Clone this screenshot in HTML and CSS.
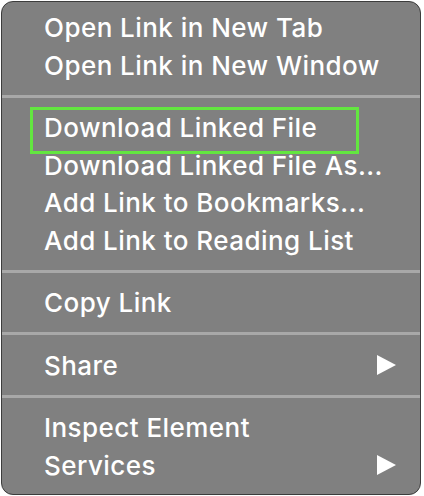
FILE: index.html
```html
<!DOCTYPE html>
<html lang="en">
<head>
<meta charset="utf-8">
<title>Context Menu</title>
<link rel="stylesheet" href="styles.css">
</head>
<body>
<div class="menu">
  <div class="item">Open Link in New Tab</div>
  <div class="item">Open Link in New Window</div>
  <div class="sep"></div>
  <div class="item highlighted">Download Linked File</div>
  <div class="item">Download Linked File As...</div>
  <div class="item">Add Link to Bookmarks...</div>
  <div class="item">Add Link to Reading List</div>
  <div class="sep"></div>
  <div class="item">Copy Link</div>
  <div class="sep"></div>
  <div class="item has-sub">Share <span class="arrow"></span></div>
  <div class="sep"></div>
  <div class="item">Inspect Element</div>
  <div class="item has-sub">Services <span class="arrow"></span></div>
</div>
</body>
</html>
```
FILE: styles.css
```css
html, body {
  margin: 0;
  padding: 0;
  background: #ffffff;
}
body {
  width: 424px;
  height: 496px;
  padding: 1px 3px 1px 1px;
  box-sizing: border-box;
  font-family: Inter, "Noto Sans", "Liberation Sans", sans-serif;
}
.menu {
  height: 494px;
  box-sizing: border-box;
  background: #808080;
  border: 1.5px solid #3c3c3c;
  border-radius: 12px;
  padding: 7px 0 8px 0;
  display: flex;
  flex-direction: column;
}
.item {
  position: relative;
  height: 37.5px;
  line-height: 37.5px;
  padding: 0 24px 0 42px;
  color: #ffffff;
  font-size: 26px;
  font-weight: 500;
  letter-spacing: 0.45px;
  white-space: nowrap;
  display: flex;
  align-items: center;
  justify-content: space-between;
}
.sep {
  height: 3px;
  margin: 10.5px 0 11.5px 0;
  background: #a8a8a8;
}
.arrow {
  width: 0;
  height: 0;
  border-top: 10.5px solid transparent;
  border-bottom: 10.5px solid transparent;
  border-left: 19px solid #ffffff;
}
.highlighted::after {
  content: "";
  position: absolute;
  left: 28px;
  top: -2px;
  width: 323px;
  height: 41px;
  border: 3px solid #63e640;
}
```
